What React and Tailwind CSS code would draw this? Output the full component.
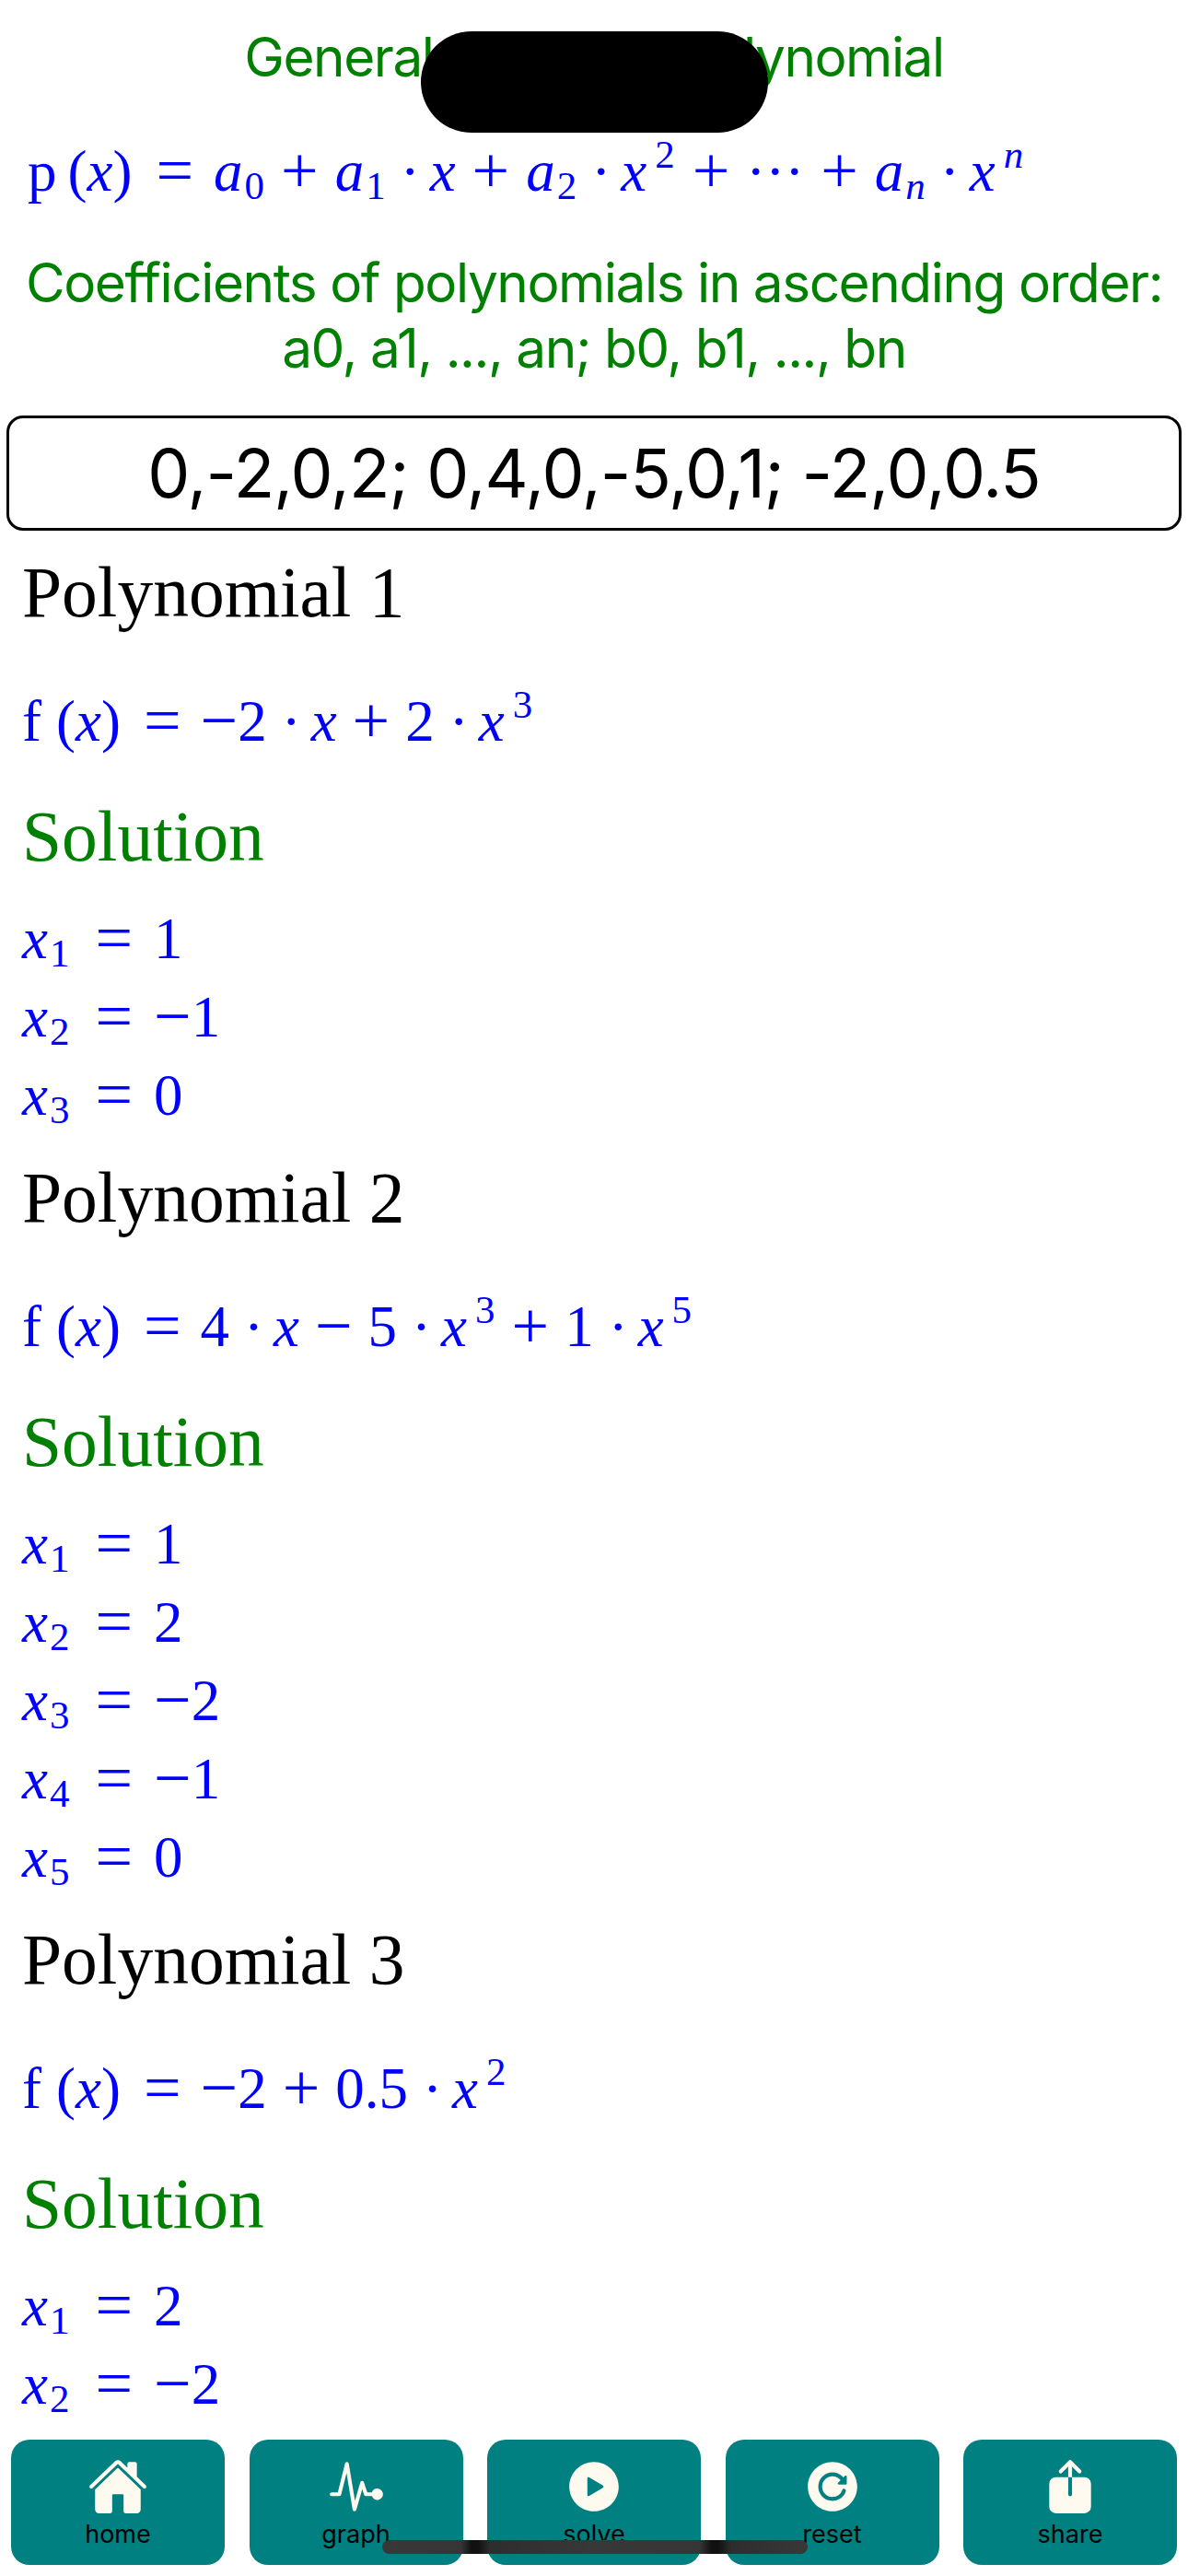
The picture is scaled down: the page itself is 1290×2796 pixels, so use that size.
import { IoHome, IoPulse, IoPlayCircle, IoReloadCircle, IoShare } from 'react-icons/io5';

const TOOLBAR = [
  { label: 'home', Icon: IoHome },
  { label: 'graph', Icon: IoPulse },
  { label: 'solve', Icon: IoPlayCircle },
  { label: 'reset', Icon: IoReloadCircle },
  { label: 'share', Icon: IoShare },
];

const Var = ({ children }) => <i>{children}</i>;
const Sub = ({ children }) => <span className="ml-[2px] align-[-9px] text-[43px] leading-none">{children}</span>;
const Sup = ({ children }) => <span className="ml-[9px] mr-[1px] align-[25px] text-[43px] leading-none">{children}</span>;
// operators come out bigger than the digits around them
const Sign = ({ children }) => <span className="align-[-2px] text-[72px] leading-none">{children}</span>;
const Op = ({ children }) => <span className="mx-[17px]"><Sign>{children}</Sign></span>;
const WideOp = ({ children }) => <span className="mx-[18px]"><Sign>{children}</Sign></span>;
const Dot = () => <span className="ml-[16px] mr-[11px]">·</span>;

function MathRow({ children }) {
  return (
    <div className="h-[80px] whitespace-nowrap font-['Liberation_Serif',serif] text-[63px] leading-[80px] text-[#0000ff]">
      {children}
    </div>
  );
}

function Root({ n, value }) {
  return (
    <div className="h-[85px] whitespace-nowrap font-['Liberation_Serif',serif] text-[63px] leading-[85px] text-[#0000ff]">
      <Var>x</Var>
      <Sub>{n}</Sub>
      <span className="ml-[28px] mr-[23px]"><Sign>=</Sign></span>
      {value < 0 && <Sign>−</Sign>}
      {Math.abs(value)}
    </div>
  );
}

function Polynomial({ title, formula, roots }) {
  return (
    <section className="mt-[23px] pl-[24px]">
      <h2 className="h-[90px] font-['Liberation_Serif',serif] text-[77.5px] leading-[90px] text-black">{title}</h2>
      <div className="mt-[55px]">
        <MathRow>{formula}</MathRow>
      </div>
      <h3 className="mt-[40px] h-[90px] font-['Liberation_Serif',serif] text-[77.5px] leading-[90px] text-[#008000]">Solution</h3>
      <div className="mt-[24px]">
        {roots.map((r, i) => (
          <Root key={i} n={i + 1} value={r} />
        ))}
      </div>
    </section>
  );
}

const Fx = () => (
  <>
    f<span className="ml-[16px]">(</span>
    <Var>x</Var>)<span className="ml-[25px] mr-[21px]"><Sign>=</Sign></span>
  </>
);

export default function App() {
  return (
    <div className="relative flex h-[2796px] w-[1290px] flex-col overflow-hidden bg-white">
      <main className="min-h-0 flex-1 overflow-hidden">
        <h1 className="pt-[26px] text-center font-['Inter',sans-serif] text-[58.5px] leading-[71px] tracking-[-0.025em] text-[#008000]">
          General form of a polynomial
        </h1>

        <div className="mt-[49px] pl-[30px]">
          <MathRow>
            p<span className="ml-[12px]">(</span>
            <Var>x</Var>)<span className="ml-[26px] mr-[22px]"><Sign>=</Sign></span>
            <Var>a</Var>
            <Sub>0</Sub>
            <WideOp>+</WideOp>
            <Var>a</Var>
            <Sub>1</Sub>
            <Dot />
            <Var>x</Var>
            <WideOp>+</WideOp>
            <Var>a</Var>
            <Sub>2</Sub>
            <Dot />
            <Var>x</Var>
            <Sup>2</Sup>
            <WideOp>+</WideOp>
            ···
            <WideOp>+</WideOp>
            <Var>a</Var>
            <Sub><i>n</i></Sub>
            <Dot />
            <Var>x</Var>
            <Sup><i>n</i></Sup>
          </MathRow>
        </div>

        <p className="mt-[45px] text-center font-['Inter',sans-serif] text-[58.5px] leading-[71px] tracking-[-0.025em] text-[#008000]">
          Coefficients of polynomials in ascending order:
          <br />
          a0, a1, ..., an; b0, b1, ..., bn
        </p>

        <div className="mx-[7px] mt-[38px] flex h-[125px] items-center justify-center rounded-[18px] border-[3px] border-black font-['Inter',sans-serif] text-[73px] tracking-[-0.013em] text-black">
          0,-2,0,2; 0,4,0,-5,0,1; -2,0,0.5
        </div>

        <div className="-mt-[1px]">
          <Polynomial
            title="Polynomial 1"
            formula={
              <>
                <Fx /><Sign>−</Sign>2<Dot />
                <Var>x</Var>
                <Op>+</Op>2<Dot />
                <Var>x</Var>
                <Sup>3</Sup>
              </>
            }
            roots={[1, -1, 0]}
          />
          <Polynomial
            title="Polynomial 2"
            formula={
              <>
                <Fx />4<Dot />
                <Var>x</Var>
                <Op>−</Op>5<Dot />
                <Var>x</Var>
                <Sup>3</Sup>
                <Op>+</Op>1<Dot />
                <Var>x</Var>
                <Sup>5</Sup>
              </>
            }
            roots={[1, 2, -2, -1, 0]}
          />
          <Polynomial
            title="Polynomial 3"
            formula={
              <>
                <Fx /><Sign>−</Sign>2<Op>+</Op>0.5<Dot />
                <Var>x</Var>
                <Sup>2</Sup>
              </>
            }
            roots={[2, -2]}
          />
        </div>
      </main>

      <nav className="flex justify-between px-[12px] pb-[12px]">
        {TOOLBAR.map(({ label, Icon }) => (
          <div key={label} className="flex h-[136px] w-[232px] flex-col items-center rounded-[20px] bg-[#008080] pt-[18px]">
            <Icon className="size-[66px] text-[#fffaf0]" />
            <span className="mt-[3px] font-['Inter',sans-serif] text-[27px] leading-[32px] text-black">{label}</span>
          </div>
        ))}
      </nav>

      {/* dynamic island + home indicator sit on top of everything */}
      <div className="absolute left-[457px] top-[34px] h-[110px] w-[377px] rounded-[55px] bg-black" />
      <div className="absolute left-[415px] top-[2757px] h-[15px] w-[462px] rounded-full bg-[linear-gradient(90deg,#383838_0%,#363636_18.5%,#111_21%,#111_22.5%,#2e2e2e_25.5%,#383838_50%,#363636_74.5%,#111_77.5%,#111_79%,#2e2e2e_82%,#383838_100%)]" />
    </div>
  );
}
